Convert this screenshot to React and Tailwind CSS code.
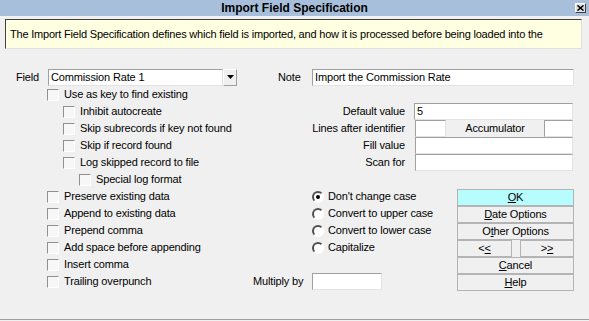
import React from "react";

// Sunken edit box look
const edit = "bg-white border-t border-l border-[#a0a0a0] border-r border-b border-r-[#e3e3e3] border-b-[#e3e3e3]";

function Check({ indent = 0, label }) {
  const pad = ["pl-[47px]", "pl-[63px]", "pl-[79px]"][indent];
  return (
    <div className={`h-[17px] flex items-center ${pad}`}>
      <span className="w-[12px] h-[12px] bg-[#f7f7f7] border-t border-l border-[#909090] border-r border-b border-r-white border-b-white shrink-0" />
      <span className="ml-[5px] whitespace-nowrap">{label}</span>
    </div>
  );
}

function Radio({ checked, label }) {
  return (
    <div className="h-[17px] flex items-center pl-[62px]">
      <span className="w-[12px] h-[12px] rounded-full bg-white border-[2px] border-t-[#505050] border-l-[#505050] border-r-white border-b-white flex items-center justify-center shrink-0">
        {checked && <span className="w-[4px] h-[4px] rounded-full bg-black" />}
      </span>
      <span className="ml-[4px] whitespace-nowrap">{label}</span>
    </div>
  );
}

function Btn({ children, ok, className = "" }) {
  return (
    <div
      className={`h-[17px] flex items-center justify-center border border-[#b4b4b4] ${
        ok ? "bg-[#b8fdfd]" : "bg-[#f0f0f0]"
      } ${className}`}
    >
      {children}
    </div>
  );
}

export default function App() {
  return (
    <div className="w-[589px] h-[321px] bg-[#f0f0f0] font-['Liberation_Sans',sans-serif] text-[11px] tracking-[-0.15px] text-black flex flex-col overflow-hidden">
      {/* title bar */}
      <div className="relative h-[16px] bg-[#a7bfdb] flex items-center justify-center font-bold text-[12px] tracking-normal leading-none">
        Import Field Specification
        <div className="absolute right-[3px] top-[3px] w-[11px] h-[10px] bg-[#e0e0e0] border-t border-l border-white border-r border-b border-r-[#404040] border-b-[#404040] flex items-center justify-center">
          <svg width="7" height="6" viewBox="0 0 7 6">
            <path d="M0.5 0.5L6.5 5.5M6.5 0.5L0.5 5.5" stroke="#000" strokeWidth="1.6" />
          </svg>
        </div>
      </div>

      {/* info box */}
      <div className="mt-[3px] ml-[5px] w-[577px] h-[30px] bg-[#ffffe1] border-t border-l border-[#404040] border-r border-b border-r-[#e0e0e0] border-b-[#e0e0e0] pl-[4px] flex items-center text-[11px] tracking-[-0.2px] whitespace-nowrap overflow-hidden">
        The Import Field Specification defines which field is imported, and how it is processed before being loaded into the
      </div>

      {/* field / note row */}
      <div className="mt-[19px] h-[18px] flex items-center">
        <span className="pl-[16px] w-[48px]">Field</span>
        <div className="flex h-[17px] w-[189px]">
          <div className={`flex-1 flex items-center pl-[2px] ${edit}`}>Commission Rate 1</div>
          <div className="w-[14px] bg-[#f0f0f0] border-t border-l border-white border-r border-b border-r-[#a0a0a0] border-b-[#a0a0a0] flex items-center justify-center">
            <svg width="7" height="4" viewBox="0 0 7 4">
              <path d="M0 0h7L3.5 4z" fill="#000" />
            </svg>
          </div>
        </div>
        <span className="ml-[41px] w-[34px]">Note</span>
        <div className={`w-[262px] h-[17px] flex items-center pl-[2px] ${edit}`}>Import the Commission Rate</div>
      </div>

      {/* body */}
      <div className="flex">
        <div className="w-[250px]">
          <Check label="Use as key to find existing" />
          <Check indent={1} label="Inhibit autocreate" />
          <Check indent={1} label="Skip subrecords if key not found" />
          <Check indent={1} label="Skip if record found" />
          <Check indent={1} label="Log skipped record to file" />
          <Check indent={2} label="Special log format" />
          <Check label="Preserve existing data" />
          <Check label="Append to existing data" />
          <Check label="Prepend comma" />
          <Check label="Add space before appending" />
          <Check label="Insert comma" />
          <Check label="Trailing overpunch" />
        </div>

        <div className="w-[339px]">
          <div className="h-[17px]" />
          <div className="h-[17px] flex items-center">
            <span className="w-[155px] text-right">Default value</span>
            <div className={`ml-[9px] w-[159px] h-[17px] flex items-center pl-[2px] ${edit}`}>5</div>
          </div>
          <div className="h-[17px] flex items-center">
            <span className="w-[155px] text-right whitespace-nowrap">Lines after identifier</span>
            <div className={`ml-[10px] w-[31px] h-[17px] ${edit}`} />
            <span className="w-[98px] text-center">Accumulator</span>
            <div className={`w-[29px] h-[17px] ${edit}`} />
          </div>
          <div className="h-[17px] flex items-center">
            <span className="w-[155px] text-right">Fill value</span>
            <div className={`ml-[10px] w-[158px] h-[17px] ${edit}`} />
          </div>
          <div className="h-[17px] flex items-center">
            <span className="w-[155px] text-right">Scan for</span>
            <div className={`ml-[10px] w-[158px] h-[17px] ${edit}`} />
          </div>
          <div className="h-[17px]" />

          <div className="flex">
            <div className="w-[207px]">
              <Radio checked label="Don't change case" />
              <Radio label="Convert to upper case" />
              <Radio label="Convert to lower case" />
              <Radio label="Capitalize" />
              <div className="h-[17px]" />
              <div className="h-[17px] flex items-center pl-[3px]">
                <span className="w-[59px] whitespace-nowrap">Multiply by</span>
                <div className={`w-[70px] h-[17px] ${edit}`} />
              </div>
            </div>
            <div className="w-[117px] mt-[1px]">
              <Btn ok>
                <span className="underline">O</span>K
              </Btn>
              <Btn>
                <span className="underline">D</span>ate Options
              </Btn>
              <Btn>
                O<span className="underline">t</span>her Options
              </Btn>
              <div className="flex justify-between">
                <Btn className="w-[55px]">
                  &lt;<span className="underline">&lt;</span>
                </Btn>
                <Btn className="w-[54px]">
                  &gt;<span className="underline">&gt;</span>
                </Btn>
              </div>
              <Btn>
                <span className="underline">C</span>ancel
              </Btn>
              <Btn>
                <span className="underline">H</span>elp
              </Btn>
            </div>
          </div>
        </div>
      </div>

      <div className="flex-1" />
      <div className="h-[1px] bg-[#a0a0a0] mb-[1px]" />
    </div>
  );
}
